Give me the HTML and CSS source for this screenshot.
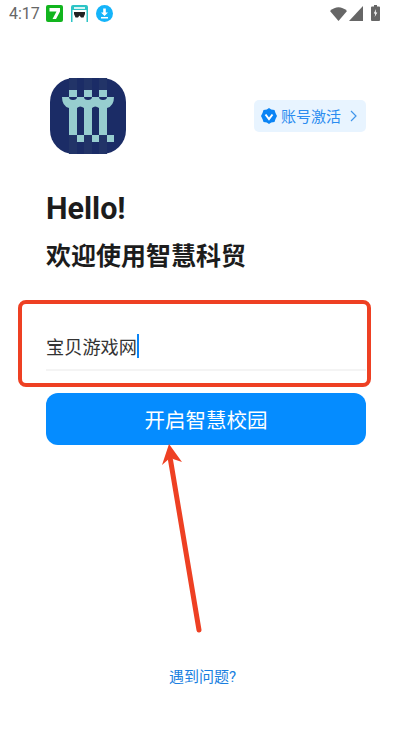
FILE: index.html
```html
<!DOCTYPE html>
<html lang="zh-CN">
<head>
    <meta charset="UTF-8">
    <meta name="viewport" content="width=device-width, initial-scale=1.0">
    <title>智慧科贸</title>
    <link rel="stylesheet" href="styles.css">
</head>
<body>
    <div class="page">
        <div class="status-bar">
            <div class="status-left">
                <span class="time">4:17</span>
                <svg class="status-app" viewBox="0 0 17 17" width="17" height="17">
                    <rect width="17" height="17" rx="2" fill="#12b51e"/>
                    <path d="M3.500 3h10.500v3.500l-4 7.500H6.500l4-7.500h-7z" fill="#fff"/>
                </svg>
                <svg class="status-app" viewBox="0 0 17 17" width="17" height="17">
                    <path d="M0 17V2a2 2 0 0 1 2-2h13a2 2 0 0 1 2 2v15h-1.500V5h-14v12z" fill="#2cc4c6"/>
                    <rect x="3" y="2" width="11" height="2" fill="#d6f4f4"/>
                    <path d="M3 7h11v2l-1.500 3.500H10L8.500 10.500 7 12.500H4.500L3 9z" fill="#222"/>
                </svg>
                <svg class="status-app" viewBox="0 0 17 17" width="17" height="17">
                    <circle cx="8.500" cy="8.500" r="8.500" fill="#14b4fa"/>
                    <path d="M7.200 3.500h2.600v4h2.200L8.500 11 5 7.500h2.200zM5 12h7v1.500H5z" fill="#fff"/>
                </svg>
            </div>
            <div class="status-right">
                <svg class="wifi" viewBox="0 0 17 15" width="17" height="15">
                    <path d="M0 5Q8.500-2.500 17 5L8.500 15z" fill="#666"/>
                </svg>
                <svg class="signal" viewBox="0 0 14 15" width="14" height="15">
                    <path d="M0 15 14 0v15z" fill="#666"/>
                </svg>
                <svg viewBox="0 0 9 16" width="9" height="16">
                    <path d="M3 0h3v1.500h2a1 1 0 0 1 1 1V15a1 1 0 0 1-1 1H1a1 1 0 0 1-1-1V2.500a1 1 0 0 1 1-1h2z" fill="#666"/>
                    <path d="M5 4 2.800 8.500h1.500L3.700 12 6.300 7.500H4.700z" fill="#fff"/>
                </svg>
            </div>
        </div>

        <div class="brand-row">
            <svg class="logo" viewBox="0 0 76 76" width="76" height="76">
                <rect width="76" height="76" rx="24" fill="#1b2c66"/>
                <rect x="19" y="0" width="8" height="76" fill="#223468"/>
                <rect x="34" y="0" width="8" height="76" fill="#223468"/>
                <rect x="49" y="0" width="8" height="76" fill="#223468"/>
                <rect x="19" y="12" width="8" height="7" fill="#97cdcf"/>
                <rect x="34" y="12" width="8" height="7" fill="#97cdcf"/>
                <rect x="49" y="12" width="8" height="7" fill="#97cdcf"/>
                <path d="M12 19H64Q64 28 57 30V57H49V30Q45 27 42 30V57H34V30Q30 27 27 30V57H19V30Q12 28 12 19Z" fill="#97cdcf"/>
                <path d="M19 19a4 3 0 0 0 8 0zM34 19a4 3 0 0 0 8 0zM49 19a4 3 0 0 0 8 0z" fill="#1b2c66"/>
                <rect x="27" y="57" width="7" height="7" fill="#97cdcf"/>
                <rect x="42" y="57" width="7" height="7" fill="#97cdcf"/>
                <rect x="57" y="57" width="7" height="7" fill="#97cdcf"/>
            </svg>
            <div class="activate">
                <svg viewBox="0 0 16 16" width="16" height="16">
                    <path d="M8 0 10.200 1.500 13.500 2 14.500 5 16 8 14.500 11 13.500 14 10.200 14.500 8 16 5.800 14.500 2.500 14 1.500 11 0 8 1.500 5 2.500 2 5.800 1.500Z" fill="#0a84f5"/>
                    <path d="M4.500 6.500 8 11l3.500-4.500" fill="none" stroke="#fff" stroke-width="2"/>
                </svg>
                <span class="activate-text">账号激活</span>
                <svg class="activate-arrow" viewBox="0 0 7 12" width="7" height="12">
                    <path d="M1 1l5 5-5 5" fill="none" stroke="#3f95ea" stroke-width="1.200"/>
                </svg>
            </div>
        </div>

        <h1 class="hello">Hello!</h1>
        <h2 class="welcome">欢迎使用智慧科贸</h2>

        <div class="field-wrap">
            <div class="field">
                <span class="field-text">宝贝游戏网</span><span class="caret"></span>
            </div>
            <div class="mark-box"></div>
        </div>

        <button class="start-btn">开启智慧校园</button>

        <div class="help">遇到问题?</div>

        <svg class="mark-arrow" viewBox="0 0 60 200" width="60" height="200">
            <path d="M39 194 10.500 24" fill="none" stroke="#ee4023" stroke-width="5" stroke-linecap="round"/>
            <path d="M9 8 22 26 10 22 2 29Z" fill="#ee4023"/>
        </svg>
    </div>
</body>
</html>
```

FILE: styles.css
```css
* {
    box-sizing: border-box;
}
body {
    margin: 0;
    background: #fff;
    font-family: Roboto, "Noto Sans CJK SC", sans-serif;
}
.page {
    position: relative;
    width: 412px;
    height: 732px;
    overflow: hidden;
    padding: 0 46px;
}
.status-bar {
    display: flex;
    justify-content: space-between;
    align-items: center;
    height: 28px;
    margin: 0 -46px;
    padding: 0 32px 2px 9px;
}
.status-left, .status-right {
    display: flex;
    align-items: center;
}
.wifi {
    margin-right: 2px;
}
.signal {
    margin-right: 8px;
}
.time {
    font-size: 16px;
    color: #666;
    margin-right: 6px;
}
.status-app {
    margin-right: 8px;
}
.brand-row {
    display: flex;
    justify-content: space-between;
    align-items: center;
    margin-top: 50px;
    padding-left: 4px;
}
.logo {
    display: block;
}
.activate {
    display: flex;
    align-items: center;
    width: 112px;
    height: 32px;
    padding-left: 7px;
    margin-top: -1px;
    background: #e8f4ff;
    border-radius: 5px;
}
.activate-text {
    margin-left: 4px;
    font-size: 15px;
    color: #2a8cf0;
}
.activate-arrow {
    margin-left: 9px;
}
.hello {
    margin: 37px 0 0;
    font-size: 30.500px;
    line-height: 36px;
    font-weight: 700;
    color: #1c1c1c;
}
.welcome {
    margin: 12px 0 0;
    font-size: 25px;
    line-height: 36px;
    font-weight: 700;
    color: #1c1c1c;
}
.field-wrap {
    position: relative;
    margin-top: 25px;
}
.field {
    display: flex;
    align-items: center;
    height: 71px;
    padding-top: 23px;
    border-bottom: 2px solid #f4f4f4;
}
.field-text {
    font-size: 18.200px;
    color: #333;
}
.caret {
    width: 2px;
    height: 24px;
    background: #0a84f5;
}
.mark-box {
    position: absolute;
    left: -28px;
    top: 0;
    width: 353px;
    height: 87px;
    border: 4px solid #ee4023;
    border-radius: 8px;
}
.start-btn {
    display: block;
    width: 320px;
    height: 52px;
    margin-top: 22px;
    border: none;
    border-radius: 12px;
    background: #058cff;
    color: #fff;
    font-family: inherit;
    font-size: 20.500px;
}
.help {
    margin-top: 222px;
    padding-right: 7px;
    text-align: center;
    font-size: 15px;
    line-height: 20px;
    color: #1a7fe0;
}
.mark-arrow {
    position: absolute;
    left: 160px;
    top: 436px;
}
```
